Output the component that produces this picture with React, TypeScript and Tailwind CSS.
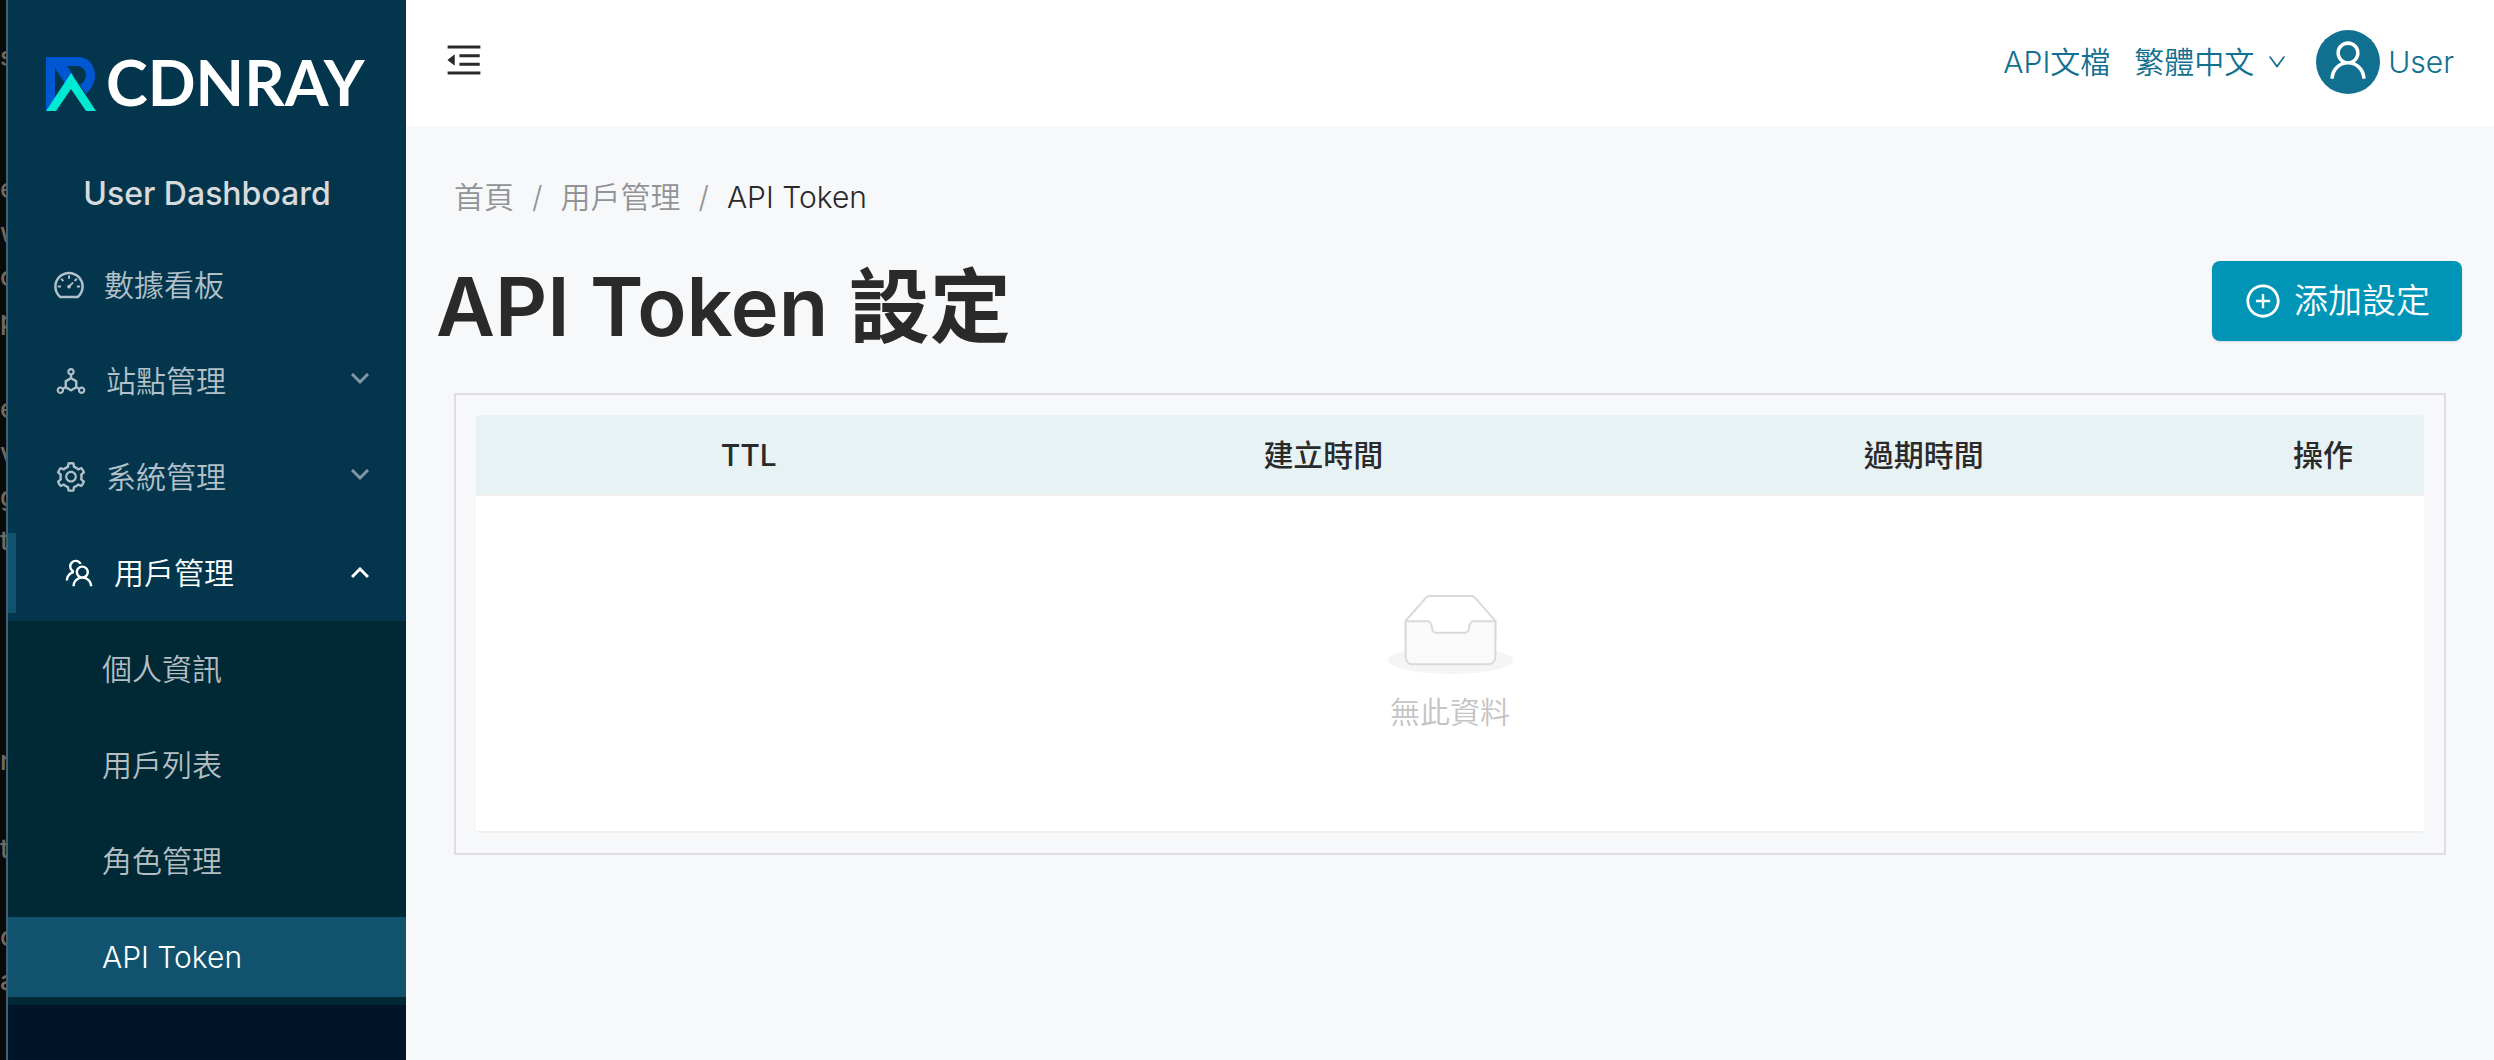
import React from "react";
import {
  AiOutlineDashboard,
  AiOutlineDeploymentUnit,
  AiOutlineDown,
  AiOutlineMenuFold,
  AiOutlinePlusCircle,
  AiOutlineSetting,
  AiOutlineTeam,
  AiOutlineUser,
} from "react-icons/ai";

const columns = [
  { title: "TTL", width: "w-[28%]" },
  { title: "建立時間", width: "w-[31%]" },
  { title: "過期時間", width: "w-auto" },
  { title: "操作", width: "w-[202px]" },
];

const subItems = ["個人資訊", "用戶列表", "角色管理", "API Token"];

// what is left of the window behind, at the edge of the screen
const edgeLines = ["s", "", "", "e", "w", "c", "p", "", "e", "v", "g", "t", "", "", "", "", "n", "", "t", "", "c", "a"];

function Logo() {
  return (
    <svg viewBox="0 0 50 54" className="h-[54px] w-[50px]" aria-hidden="true">
      <path d="M0 0H32C42 0 49 8 49 18C49 26 45 32 40 37L34 28C38 25 40 22 40 18C40 13 36 9 31 9H21L27 18L20 28L9 11V43L0 54Z" fill="#0057d2" />
      <path d="M25 16L50 54H40L25 32L10 54H0Z" fill="#00ead3" />
    </svg>
  );
}

function Chevron({ up }: { up?: boolean }) {
  return (
    <svg viewBox="0 0 18 12" className="h-3 w-[18px]" fill="none" stroke="currentColor" strokeWidth="3" aria-hidden="true">
      <path d={up ? "M1 10L9 2L17 10" : "M1 1L9 9L17 1"} />
    </svg>
  );
}

function EmptyBox() {
  return (
    <svg viewBox="0 0 64 41" className="h-20 w-[125px]" aria-hidden="true">
      <g transform="translate(0 1)" fill="none" fillRule="evenodd">
        <ellipse fill="#f5f5f5" cx="32" cy="33" rx="32" ry="7" />
        <g stroke="#d9d9d9">
          <path d="M55 12.76L44.854 1.258C44.367.474 43.656 0 42.907 0H21.093c-.749 0-1.46.474-1.947 1.257L9 12.761V22h46v-9.24z" />
          <path fill="#fafafa" d="M41.613 15.931c0-1.605.994-2.93 2.227-2.931H55v18.137C55 33.26 53.68 35 52.05 35h-40.1C10.32 35 9 33.259 9 31.137V13h11.16c1.233 0 2.227 1.323 2.227 2.928v.022c0 1.605 1.005 2.901 2.237 2.901h14.752c1.232 0 2.237-1.308 2.237-2.913v-.007z" />
        </g>
      </g>
    </svg>
  );
}

function Sidebar() {
  return (
    <aside className="flex w-[400px] shrink-0 flex-col border-l-2 border-[#3d6274] bg-[#001529] text-[#b2c0c9]">
      <div className="bg-[#03364d]">
        <div className="flex h-[168px] items-center gap-2.5 pl-[38px]">
          <Logo />
          <span className="pb-1 font-['Lato'] text-[63px] font-bold text-white">CDNRAY</span>
        </div>
        <div className="flex h-[52px] items-center justify-center text-[32px] font-medium text-[#d9dadc]">User Dashboard</div>
        <nav className="pt-[25px]">
          <a href="#" className="mb-4 flex h-20 items-center gap-[18px] pl-[44px]">
            <AiOutlineDashboard className="size-[34px]" />
            數據看板
          </a>
          <button className="mb-4 flex h-20 w-full items-center gap-[18px] pr-[37px] pl-[46px]">
            <AiOutlineDeploymentUnit className="size-[34px]" />
            站點管理
            <span className="ml-auto pb-1 text-[#8197a5]"><Chevron /></span>
          </button>
          <button className="mb-4 flex h-20 w-full items-center gap-[18px] pr-[37px] pl-[46px]">
            <AiOutlineSetting className="size-[34px]" />
            系統管理
            <span className="ml-auto pb-1 text-[#8197a5]"><Chevron /></span>
          </button>
          <button className="mb-2 flex h-20 w-full items-center gap-[18px] border-l-8 border-[#11536f] pr-[37px] pl-[46px] text-white">
            <AiOutlineTeam className="size-[34px]" />
            用戶管理
            <span className="ml-auto"><Chevron up /></span>
          </button>
        </nav>
      </div>
      <nav className="flex flex-col gap-4 bg-[#002835] py-2">
        {subItems.map((item) => (
          <a
            key={item}
            href="#"
            className={
              item === "API Token"
                ? "flex h-20 items-center bg-[#11536f] pl-[94px] text-white"
                : "flex h-20 items-center pl-[94px] text-[#b2bec2]"
            }
          >
            {item}
          </a>
        ))}
      </nav>
    </aside>
  );
}

function Header() {
  return (
    <header className="flex h-[126px] items-center bg-white pr-10 pb-0.5 pl-[37px] text-[#11708f]">
      <button aria-label="menu" className="pb-1 text-[#2a2a2a]">
        <AiOutlineMenuFold className="size-[42px]" />
      </button>
      <a href="#" className="ml-auto">API文檔</a>
      <button className="ml-6 flex items-center gap-3">
        繁體中文
        <AiOutlineDown className="size-[22px]" />
      </button>
      <a href="#" className="ml-7 flex items-center gap-2">
        <span className="flex size-16 items-center justify-center rounded-full bg-[#11708f] pb-1 text-white">
          <AiOutlineUser className="size-12" />
        </span>
        User
      </a>
    </header>
  );
}

export default function App() {
  return (
    <div className="flex min-h-screen bg-[#f7f8fa] font-['Inter','Noto_Sans_CJK_TC',sans-serif] text-[30px] leading-[44px] font-[350] text-[#2a2a2a]">
      <div aria-hidden="true" className="w-[6px] shrink-0 overflow-hidden bg-[#0a0a0a] pt-[35px] text-[26px] font-medium text-[#75695d]">
        {edgeLines.map((line, index) => (
          <div key={index} className="h-11">{line}</div>
        ))}
      </div>
      <Sidebar />
      <div className="min-w-0 flex-1">
        <Header />
        <main>
          <nav className="flex gap-[18px] px-12 pt-[49px] text-[#929395]">
            <a href="#">首頁</a>
            <span>/</span>
            <a href="#">用戶管理</a>
            <span>/</span>
            <span className="text-[#2a2a2a]">API Token</span>
          </nav>
          <div className="flex items-start justify-between px-8 pt-[30px]">
            <h1 className="-ml-0.5 text-[81px] leading-[116px] font-semibold">API Token 設定</h1>
            <button className="mt-3 flex h-20 items-center gap-3 rounded-lg bg-[#0095b6] px-8 text-[34px] text-white shadow-sm">
              <AiOutlinePlusCircle className="size-[38px]" />
              添加設定
            </button>
          </div>
          <div className="mx-12 mt-7 border-2 border-[#dedde1] p-5">
            <table className="w-full table-fixed overflow-hidden rounded bg-white">
              <thead>
                <tr className="h-20 border-b-2 border-[#efefef] bg-[#e6f2f4]">
                  {columns.map((col) => (
                    <th key={col.title} className={`${col.width} font-medium`}>{col.title}</th>
                  ))}
                </tr>
              </thead>
              <tbody>
                <tr className="h-[337px] border-b-2 border-[#efefef]">
                  <td colSpan={4} className="text-[#c4c4c4]">
                    <div className="flex flex-col items-center gap-4">
                      <EmptyBox />
                      無此資料
                    </div>
                  </td>
                </tr>
              </tbody>
            </table>
          </div>
        </main>
      </div>
    </div>
  );
}
